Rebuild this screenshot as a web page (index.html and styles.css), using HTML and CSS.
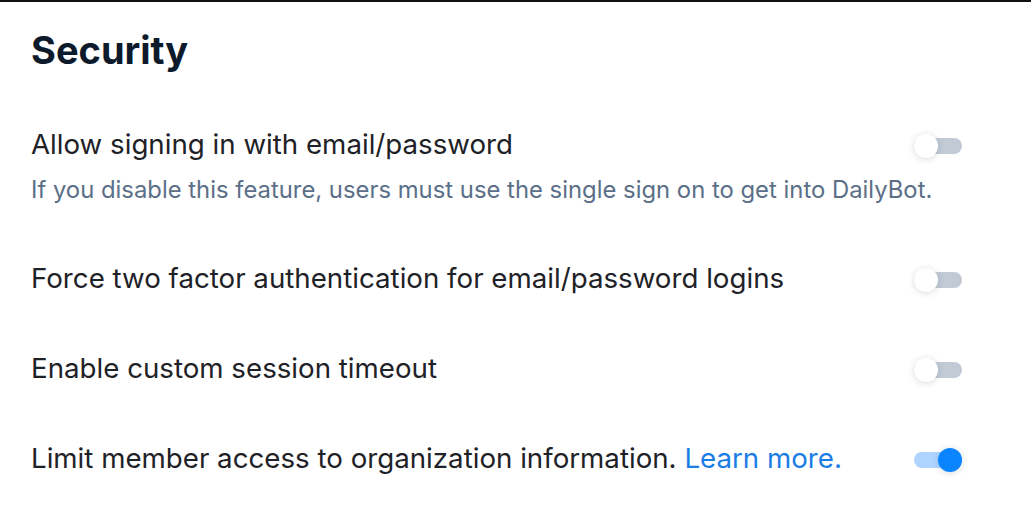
FILE: index.html
```html
<!DOCTYPE html>
<html lang="en">
<head>
    <meta charset="UTF-8">
    <meta name="viewport" content="width=device-width, initial-scale=1.0">
    <title>Security settings</title>
    <link rel="stylesheet" href="styles.css">
</head>
<body>

    <!-- Security settings panel -->
    <main class="panel">
        <h1 class="title">Security</h1>

        <div class="setting">
            <div class="setting-text">
                <p class="label">Allow signing in with email/password</p>
                <p class="hint">If you disable this feature, users must use the single sign on to get into DailyBot.</p>
            </div>
            <span class="switch"><span class="track"></span><span class="thumb"></span></span>
        </div>

        <div class="setting">
            <div class="setting-text">
                <p class="label">Force two factor authentication for email/password logins</p>
            </div>
            <span class="switch"><span class="track"></span><span class="thumb"></span></span>
        </div>

        <div class="setting">
            <div class="setting-text">
                <p class="label">Enable custom session timeout</p>
            </div>
            <span class="switch"><span class="track"></span><span class="thumb"></span></span>
        </div>

        <div class="setting">
            <div class="setting-text">
                <p class="label">Limit member access to organization information. <a href="#" class="link">Learn more.</a></p>
            </div>
            <span class="switch on"><span class="track"></span><span class="thumb"></span></span>
        </div>
    </main>

</body>
</html>
```

FILE: styles.css
```css
body {
    margin: 0;
    font-family: Inter, "Noto Sans", sans-serif;
    background-color: #fff;
    border-top: 2px solid #111;
}

.panel {
    padding: 20px 69px 0 31px;
}

.title {
    margin: 0 0 21px;
    font-size: 38px;
    line-height: 56px;
    font-weight: 700;
    color: #0c1a2b;
}

.setting {
    display: flex;
    justify-content: space-between;
    align-items: flex-start;
    padding: 29px 0;
}

.setting-text {
    flex: 1;
    min-width: 0;
}

.label {
    margin: 0;
    font-size: 27.7px;
    line-height: 32px;
    color: #1e2227;
}

.hint {
    margin: 16px 0 0;
    font-size: 23.85px;
    line-height: 28px;
    color: #5b6f88;
    white-space: nowrap;
}

.link {
    color: #1a7de6;
    text-decoration: none;
}

/* toggle switch */
.switch {
    position: relative;
    width: 48px;
    height: 24px;
    margin-top: 6px;
    flex-shrink: 0;
}

.track {
    position: absolute;
    left: 0;
    right: 0;
    top: 4px;
    height: 16px;
    border-radius: 8px;
    background-color: #c2cad6;
}

.thumb {
    position: absolute;
    left: 0;
    top: 0;
    width: 24px;
    height: 24px;
    border-radius: 50%;
    background-color: #fff;
    box-shadow: 0 1px 6px rgba(30, 50, 80, 0.18);
}

.switch.on .track {
    background-color: #afd4ff;
}

.switch.on .thumb {
    left: 24px;
    background-color: #0a84ff;
}
```
